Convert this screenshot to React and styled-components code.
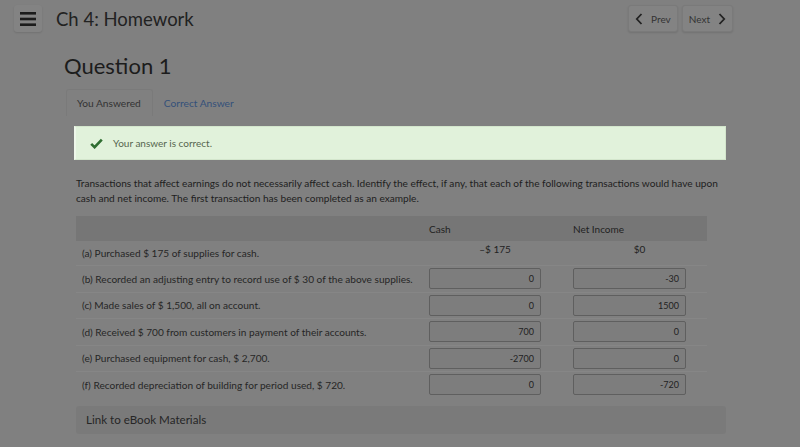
import React from 'react'
import styled, { createGlobalStyle } from 'styled-components';

const Global = createGlobalStyle`
  html, body {
    margin: 0;
    background: #808080;
    font-family: Lato, "Open Sans", sans-serif;
    color: #1e1e1e;
  }
`;

const rows = [
  { label: '(b) Recorded an adjusting entry to record use of $ 30 of the above supplies.', cash: '0', net: '-30' },
  { label: '(c) Made sales of $ 1,500, all on account.', cash: '0', net: '1500' },
  { label: '(d) Received $ 700 from customers in payment of their accounts.', cash: '700', net: '0' },
  { label: '(e) Purchased equipment for cash, $ 2,700.', cash: '-2700', net: '0' },
  { label: '(f) Recorded depreciation of building for period used, $ 720.', cash: '0', net: '-720' },
];

const App = () => {
  return (
    <>
      <Global />
      <TopBar>
        <MenuButton>
          <svg width="16" height="14" viewBox="0 0 16 14">
            <rect x="0" y="0" width="16" height="2.6" fill="#1c1c1c" />
            <rect x="0" y="5.7" width="16" height="2.6" fill="#1c1c1c" />
            <rect x="0" y="11.4" width="16" height="2.6" fill="#1c1c1c" />
          </svg>
        </MenuButton>
        <Title>Ch 4: Homework</Title>
        <Nav>
          <NavButton>
            <Chevron viewBox="0 0 8 12"><path d="M6.5 1 L1.8 6 L6.5 11" /></Chevron>
            Prev
          </NavButton>
          <NavButton>
            Next
            <Chevron viewBox="0 0 8 12"><path d="M1.5 1 L6.2 6 L1.5 11" /></Chevron>
          </NavButton>
        </Nav>
      </TopBar>

      <Main>
        <Heading>Question 1</Heading>
        <Tabs>
          <Tab active>You Answered</Tab>
          <Tab>Correct Answer</Tab>
        </Tabs>

        <Section>
          <Banner>
            <svg width="13" height="11" viewBox="0 0 13 11">
              <path d="M1.2 5.8 L4.6 9.2 L11.8 1.6" fill="none" stroke="#2f6e31" strokeWidth="2.6" />
            </svg>
            <span>Your answer is correct.</span>
          </Banner>

          <Body>
            <Intro>
              Transactions that affect earnings do not necessarily affect cash. Identify the effect, if any, that each of the following transactions would have upon cash and net income. The first transaction has been completed as an example.
            </Intro>

            <Table>
              <HeadRow>
                <span />
                <HeadCell>Cash</HeadCell>
                <HeadCell>Net Income</HeadCell>
              </HeadRow>
              <Row first>
                <Label>(a) Purchased $ 175 of supplies for cash.</Label>
                <Example>–$ 175</Example>
                <Example>$0</Example>
              </Row>
              {rows.map((r) => (
                <Row key={r.label}>
                  <Label>{r.label}</Label>
                  <Field>{r.cash}</Field>
                  <Field>{r.net}</Field>
                </Row>
              ))}
            </Table>

            <EbookLink>Link to eBook Materials</EbookLink>
          </Body>
        </Section>
      </Main>
    </>
  )
}

const TopBar = styled.header`
  display: flex;
  align-items: center;
  height: 37px;
  padding: 0 67px 0 14px;
`;

const MenuButton = styled.div`
  width: 28px;
  height: 27px;
  display: flex;
  align-items: center;
  justify-content: center;
  background: #838383;
  border-radius: 3px;
  box-shadow: 0 1px 2px rgba(0, 0, 0, 0.12);
`;

const Title = styled.div`
  margin-left: 14px;
  font-size: 18.5px;
  color: #222;
`;

const Nav = styled.div`
  margin-left: auto;
  display: flex;
  gap: 4px;
`;

const NavButton = styled.div`
  height: 25px;
  padding: 0 6px;
  display: flex;
  align-items: center;
  gap: 8px;
  font-size: 10px;
  color: #333;
  background: #838383;
  border: 1px solid #7a7a7a;
  border-radius: 3px;
  box-shadow: 0 1px 2px rgba(0, 0, 0, 0.12);
`;

const Chevron = styled.svg`
  width: 8px;
  height: 12px;
  fill: none;
  stroke: #222;
  stroke-width: 1.8;
`;

const Main = styled.main`
  padding-left: 64px;
`;

const Heading = styled.h1`
  margin: 15px 0 0;
  font-size: 22px;
  font-weight: 400;
  color: #1c1c1c;
  line-height: 28px;
`;

const Tabs = styled.div`
  display: flex;
  margin: 9px 0 0 2px;
  height: 27px;
`;

const Tab = styled.div`
  display: flex;
  align-items: center;
  padding: 0 11px 0 10px;
  font-size: 10.2px;
  color: ${(p) => (p.active ? '#333' : '#34507a')};
  border: 1px solid ${(p) => (p.active ? '#7a7a7a' : 'transparent')};
  border-bottom: none;
  border-radius: 3px 3px 0 0;
`;

const Section = styled.section`
  width: 652px;
  margin: 10px 0 0 10px;
`;

const Banner = styled.div`
  height: 34px;
  display: flex;
  align-items: center;
  gap: 10px;
  padding-left: 14px;
  box-sizing: border-box;
  background: #e1f2db;
  border: 1px solid #d3e6cc;
  border-left: 2px solid #eef7ea;
  font-size: 10px;
  color: #56664f;
`;

const Body = styled.div`
  padding-left: 2px;
`;

const Intro = styled.p`
  margin: 16px 0 0;
  font-size: 10.1px;
  line-height: 15px;
  color: #1e1e1e;
`;

const Table = styled.div`
  width: 631px;
  margin-top: 10px;
`;

const grid = `
  display: grid;
  grid-template-columns: 1fr 112px 145px;
  padding-right: 21px;
  align-items: center;
  box-sizing: border-box;

  & > :nth-child(3) {
    margin-left: 32px;
  }
`;

const HeadRow = styled.div`
  ${grid}
  height: 25px;
  background: #767676;
`;

const HeadCell = styled.div`
  font-size: 10px;
  color: #222;
`;

const Row = styled.div`
  ${grid}
  height: ${(p) => (p.first ? '24px' : '26.5px')};
  border-top: ${(p) => (p.first ? 'none' : '1px solid #868686')};
`;

const Label = styled.div`
  padding-left: 6px;
  font-size: 10.1px;
  color: #262626;
  white-space: nowrap;
`;

const Example = styled.div`
  text-align: center;
  padding-left: 20px;
  font-size: 10px;
  color: #222;
  margin-top: -8px;
`;

const Field = styled.div`
  height: 21px;
  box-sizing: border-box;
  border: 1px solid #5f5f5f;
  border-radius: 2px;
  background: #7d7d7d;
  display: flex;
  align-items: center;
  justify-content: flex-end;
  padding-right: 6px;
  font-size: 9px;
  color: #222;
`;

const EbookLink = styled.div`
  margin-top: 8px;
  height: 28px;
  display: flex;
  align-items: center;
  padding-left: 10px;
  background: #7a7a7a;
  border-radius: 3px;
  font-size: 11.6px;
  color: #262626;
`;

export default App
